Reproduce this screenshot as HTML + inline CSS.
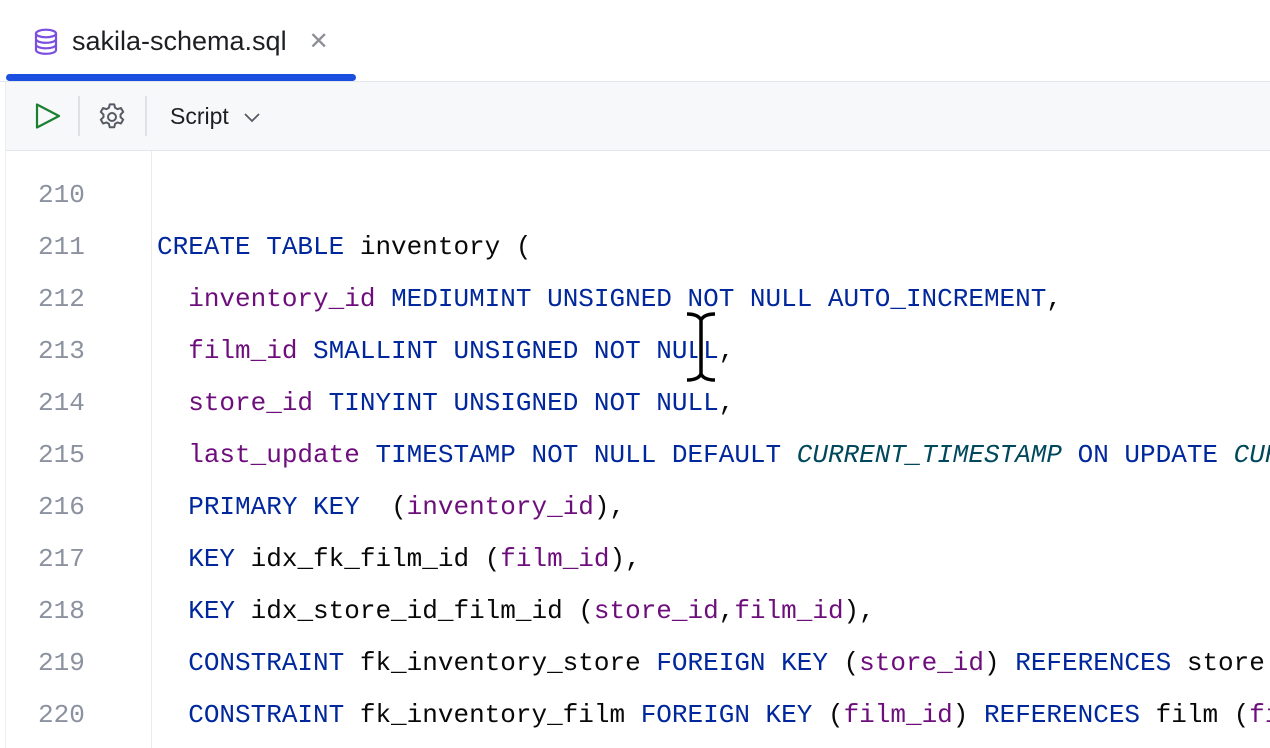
<!DOCTYPE html>
<html><head><meta charset="utf-8"><style>
body{margin:0;width:1270px;height:748px;overflow:hidden;background:#fff;font-family:"Liberation Sans",sans-serif;position:relative}
.tabbar{position:absolute;left:0;top:0;width:1270px;height:81px;background:#fff;border-bottom:1px solid #e4e6ed}
.tab{position:absolute;left:33px;top:26px;font-size:27px;color:#1e1f22;display:flex;align-items:center;white-space:nowrap}
.ul{position:absolute;left:6px;top:74px;width:350px;height:7px;background:#1b4fe0;border-radius:4px}
.tb{position:absolute;left:6px;top:82px;width:1264px;height:68px;background:#f7f8fa;border-bottom:1px solid #e4e6ed}
.sep{position:absolute;top:96px;width:2px;height:40px;background:#dfe1e5}
.lvl{position:absolute;left:5px;top:0;width:1px;height:748px;background:#eceef2}
.gut{position:absolute;left:151px;top:151px;width:1px;height:597px;background:#ebecf0}
.code{position:absolute;left:0;top:169px;width:1270px;height:579px;overflow:hidden;font-family:"Liberation Mono",monospace;font-size:26px;line-height:52px;white-space:pre}
.ln{position:absolute;left:38px;width:60px;color:#8c91a0}
.c{position:absolute;left:157px;color:#080808}
.k{color:#00279c}.p{color:#6e0e7c}.i{color:#00485c;font-style:italic}
</style></head><body>
<div class="lvl"></div>
<div class="tabbar"></div>
<div class="tab"><svg width="26" height="28" viewBox="0 0 26 28"><g fill="none" stroke="#7a4fe0" stroke-width="2.2"><ellipse cx="13" cy="5.5" rx="10" ry="3.8"/><path d="M3 5.5v16.5c0 2.2 4.5 3.8 10 3.8s10-1.6 10-3.8V5.5"/><path d="M3 11c0 2.2 4.5 3.8 10 3.8s10-1.6 10-3.8M3 16.5c0 2.2 4.5 3.8 10 3.8s10-1.6 10-3.8"/></g></svg><span style="margin-left:13px">sakila-schema.sql</span><span style="margin-left:22px;color:#8c8f96;font-size:24px">✕</span></div>
<div class="ul"></div>
<div class="tb"></div>
<svg style="position:absolute;left:34px;top:102px" width="28" height="28" viewBox="0 0 28 28"><path d="M3 2.5v23l22-11.5z" fill="none" stroke="#1a7f2e" stroke-width="2.2" stroke-linejoin="round"/></svg>
<div class="sep" style="left:78px"></div>
<svg style="position:absolute;left:96px;top:101px" width="32" height="32" viewBox="0 0 24 24"><g fill="none" stroke="#555a63" stroke-width="1.5"><circle cx="12" cy="12" r="3"/><path d="M10.3 2.5h3.4l.6 2.6 1.8 1 2.6-.8 1.7 2.9-2 1.9v2l2 1.9-1.7 2.9-2.6-.8-1.8 1-.6 2.6h-3.4l-.6-2.6-1.8-1-2.6.8-1.7-2.9 2-1.9v-2l-2-1.9 1.7-2.9 2.6.8 1.8-1z" stroke-linejoin="round"/></g></svg>
<div class="sep" style="left:145px"></div>
<div style="position:absolute;left:170px;top:103px;font-size:23px;color:#1e1f22">Script</div>
<svg style="position:absolute;left:243px;top:110px" width="18" height="14" viewBox="0 0 18 14"><path d="M2 4l7 7 7-7" fill="none" stroke="#555a63" stroke-width="1.8"/></svg>
<div class="gut"></div>
<div class="code">
<div class="ln" style="top:0">210</div>
<div class="ln" style="top:52px">211</div><div class="c" style="top:52px"><span class="k">CREATE TABLE</span> inventory (</div>
<div class="ln" style="top:104px">212</div><div class="c" style="top:104px">  <span class="p">inventory_id</span> <span class="k">MEDIUMINT UNSIGNED NOT NULL AUTO_INCREMENT</span>,</div>
<div class="ln" style="top:156px">213</div><div class="c" style="top:156px">  <span class="p">film_id</span> <span class="k">SMALLINT UNSIGNED NOT NULL</span>,</div>
<div class="ln" style="top:208px">214</div><div class="c" style="top:208px">  <span class="p">store_id</span> <span class="k">TINYINT UNSIGNED NOT NULL</span>,</div>
<div class="ln" style="top:260px">215</div><div class="c" style="top:260px">  <span class="p">last_update</span> <span class="k">TIMESTAMP NOT NULL DEFAULT</span> <span class="i">CURRENT_TIMESTAMP</span> <span class="k">ON UPDATE</span> <span class="i">CURRENT_TIMESTAMP</span>,</div>
<div class="ln" style="top:312px">216</div><div class="c" style="top:312px">  <span class="k">PRIMARY KEY</span>  (<span class="p">inventory_id</span>),</div>
<div class="ln" style="top:364px">217</div><div class="c" style="top:364px">  <span class="k">KEY</span> idx_fk_film_id (<span class="p">film_id</span>),</div>
<div class="ln" style="top:416px">218</div><div class="c" style="top:416px">  <span class="k">KEY</span> idx_store_id_film_id (<span class="p">store_id</span>,<span class="p">film_id</span>),</div>
<div class="ln" style="top:468px">219</div><div class="c" style="top:468px">  <span class="k">CONSTRAINT</span> fk_inventory_store <span class="k">FOREIGN KEY</span> (<span class="p">store_id</span>) <span class="k">REFERENCES</span> store (<span class="p">store_id</span>)</div>
<div class="ln" style="top:520px">220</div><div class="c" style="top:520px">  <span class="k">CONSTRAINT</span> fk_inventory_film <span class="k">FOREIGN KEY</span> (<span class="p">film_id</span>) <span class="k">REFERENCES</span> film (<span class="p">film_id</span>)</div>
</div>
<svg style="position:absolute;left:683px;top:310px" width="36" height="74" viewBox="0 0 36 74"><path d="M4 4c7 0 12 2 14 6 2-4 7-6 14-6M18 10v54M4 70c7 0 12-2 14-6 2 4 7 6 14 6" fill="none" stroke="#fff" stroke-width="7"/><path d="M4 4c7 0 12 2 14 6 2-4 7-6 14-6M18 10v54M4 70c7 0 12-2 14-6 2 4 7 6 14 6" fill="none" stroke="#000" stroke-width="3.5"/></svg>
</body></html>
